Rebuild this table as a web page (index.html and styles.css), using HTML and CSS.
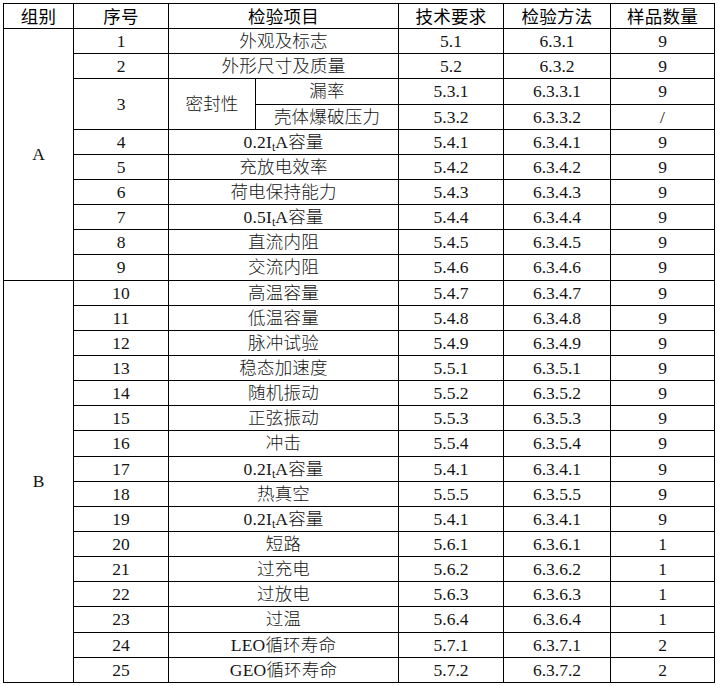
FILE: index.html
```html
<!DOCTYPE html>
<html lang="zh-CN">
<head>
<meta charset="utf-8">
<title>检验项目</title>
<link rel="stylesheet" href="styles.css">
</head>
<body>
<table class="grid">
  <colgroup>
    <col class="c-group">
    <col class="c-no">
    <col class="c-sub">
    <col class="c-item">
    <col class="c-req">
    <col class="c-method">
    <col class="c-qty">
  </colgroup>
  <thead>
    <tr class="head">
      <th>组别</th>
      <th>序号</th>
      <th colspan="2">检验项目</th>
      <th>技术要求</th>
      <th>检验方法</th>
      <th>样品数量</th>
    </tr>
  </thead>
  <tbody>
    <tr><td rowspan="10" class="grp">A</td><td>1</td><td colspan="2" class="zh">外观及标志</td><td>5.1</td><td>6.3.1</td><td>9</td></tr>
    <tr><td>2</td><td colspan="2" class="zh">外形尺寸及质量</td><td>5.2</td><td>6.3.2</td><td>9</td></tr>
    <tr><td rowspan="2">3</td><td rowspan="2" class="zh">密封性</td><td class="zh">漏率</td><td>5.3.1</td><td>6.3.3.1</td><td>9</td></tr>
    <tr><td class="zh">壳体爆破压力</td><td>5.3.2</td><td>6.3.3.2</td><td>/</td></tr>
    <tr><td>4</td><td colspan="2" class="zh">0.2I<sub>t</sub>A容量</td><td>5.4.1</td><td>6.3.4.1</td><td>9</td></tr>
    <tr><td>5</td><td colspan="2" class="zh">充放电效率</td><td>5.4.2</td><td>6.3.4.2</td><td>9</td></tr>
    <tr><td>6</td><td colspan="2" class="zh">荷电保持能力</td><td>5.4.3</td><td>6.3.4.3</td><td>9</td></tr>
    <tr><td>7</td><td colspan="2" class="zh">0.5I<sub>t</sub>A容量</td><td>5.4.4</td><td>6.3.4.4</td><td>9</td></tr>
    <tr><td>8</td><td colspan="2" class="zh">直流内阻</td><td>5.4.5</td><td>6.3.4.5</td><td>9</td></tr>
    <tr><td>9</td><td colspan="2" class="zh">交流内阻</td><td>5.4.6</td><td>6.3.4.6</td><td>9</td></tr>
    <tr><td rowspan="16" class="grp">B</td><td>10</td><td colspan="2" class="zh">高温容量</td><td>5.4.7</td><td>6.3.4.7</td><td>9</td></tr>
    <tr><td>11</td><td colspan="2" class="zh">低温容量</td><td>5.4.8</td><td>6.3.4.8</td><td>9</td></tr>
    <tr><td>12</td><td colspan="2" class="zh">脉冲试验</td><td>5.4.9</td><td>6.3.4.9</td><td>9</td></tr>
    <tr><td>13</td><td colspan="2" class="zh">稳态加速度</td><td>5.5.1</td><td>6.3.5.1</td><td>9</td></tr>
    <tr><td>14</td><td colspan="2" class="zh">随机振动</td><td>5.5.2</td><td>6.3.5.2</td><td>9</td></tr>
    <tr><td>15</td><td colspan="2" class="zh">正弦振动</td><td>5.5.3</td><td>6.3.5.3</td><td>9</td></tr>
    <tr><td>16</td><td colspan="2" class="zh">冲击</td><td>5.5.4</td><td>6.3.5.4</td><td>9</td></tr>
    <tr><td>17</td><td colspan="2" class="zh">0.2I<sub>t</sub>A容量</td><td>5.4.1</td><td>6.3.4.1</td><td>9</td></tr>
    <tr><td>18</td><td colspan="2" class="zh">热真空</td><td>5.5.5</td><td>6.3.5.5</td><td>9</td></tr>
    <tr><td>19</td><td colspan="2" class="zh">0.2I<sub>t</sub>A容量</td><td>5.4.1</td><td>6.3.4.1</td><td>9</td></tr>
    <tr><td>20</td><td colspan="2" class="zh">短路</td><td>5.6.1</td><td>6.3.6.1</td><td>1</td></tr>
    <tr><td>21</td><td colspan="2" class="zh">过充电</td><td>5.6.2</td><td>6.3.6.2</td><td>1</td></tr>
    <tr><td>22</td><td colspan="2" class="zh">过放电</td><td>5.6.3</td><td>6.3.6.3</td><td>1</td></tr>
    <tr><td>23</td><td colspan="2" class="zh">过温</td><td>5.6.4</td><td>6.3.6.4</td><td>1</td></tr>
    <tr><td>24</td><td colspan="2" class="zh">LEO循环寿命</td><td>5.7.1</td><td>6.3.7.1</td><td>2</td></tr>
    <tr><td>25</td><td colspan="2" class="zh">GEO循环寿命</td><td>5.7.2</td><td>6.3.7.2</td><td>2</td></tr>
  </tbody>
</table>
</body>
</html>
```
FILE: styles.css
```css
html, body {
  margin: 0;
  padding: 0;
  background: #ffffff;
}

body {
  padding: 3px 0 0 3px;
}

.grid {
  border-collapse: collapse;
  table-layout: fixed;
  width: 711px;
  font-family: "Liberation Serif", "Noto Sans CJK SC", serif;
  font-size: 17.5px;
  color: #141414;
}

.c-group { width: 70px; }
.c-no { width: 95px; }
.c-sub { width: 87px; }
.c-item { width: 143px; }
.c-req { width: 105px; }
.c-method { width: 107px; }
.c-qty { width: 104px; }

.grid th,
.grid td {
  border: 1px solid #000;
  padding: 0;
  text-align: center;
  vertical-align: middle;
  line-height: 20px;
  white-space: nowrap;
}

.grid tr {
  height: 25.15px;
}

.head th {
  font-family: "Noto Sans CJK SC", sans-serif;
  font-weight: 400;
  font-size: 17.5px;
  letter-spacing: 0.2px;
  color: #000;
}

.zh {
  font-size: 17.5px;
  font-weight: 300;
  letter-spacing: 0.2px;
}

.grid sub {
  font-size: 12px;
  line-height: 0;
  vertical-align: -3px;
  letter-spacing: 0;
}

.grp {
  font-size: 17.5px;
}
```
